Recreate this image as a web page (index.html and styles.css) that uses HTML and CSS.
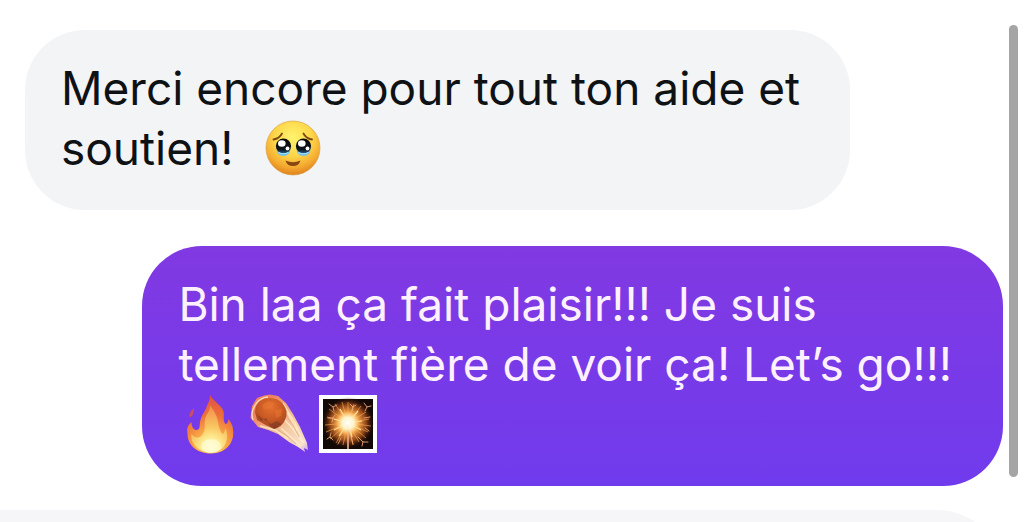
FILE: index.html
```html
<!DOCTYPE html>
<html lang="fr">
<head>
    <meta charset="UTF-8">
    <meta name="viewport" content="width=device-width, initial-scale=1.0">
    <title>Messages</title>
    <link rel="stylesheet" href="styles.css">
</head>
<body>
    <main class="chat">
        <div class="chat__body">
            <div class="thread">
                <p class="bubble bubble--received">
                    Merci encore pour tout ton aide et soutien!&nbsp;
                    <svg class="emoji" viewBox="0 0 60 60" role="img" aria-label="Visage retenant ses larmes">
                        <defs>
                            <radialGradient id="face" cx="0.5" cy="0.3" r="0.7">
                                <stop offset="0" stop-color="#fff46e"/>
                                <stop offset="0.5" stop-color="#fdd548"/>
                                <stop offset="0.8" stop-color="#f4aa30"/>
                                <stop offset="1" stop-color="#df811d"/>
                            </radialGradient>
                            <linearGradient id="eye" x1="0" y1="0" x2="0" y2="1">
                                <stop offset="0" stop-color="#0c0806"/>
                                <stop offset="0.75" stop-color="#0f141c"/>
                                <stop offset="1" stop-color="#27699a"/>
                            </linearGradient>
                        </defs>
                        <circle cx="30" cy="30" r="27" fill="url(#face)" stroke="#d99a35" stroke-width="0.6"/>
                        <path d="M10.5 21.5Q16.5 20.5 19 15.5M49 21.5Q43 20.5 40.5 15.5" fill="none" stroke="#7b4a12" stroke-width="1.8" stroke-linecap="round"/>
                        <path d="M13.5 31Q14 38 20.5 38Q27 38 27.500 31ZM33.5 31Q34 38 40.5 38Q47 38 47.5 31Z" fill="#6fbfe6"/>
                        <circle cx="20.500" cy="28" r="7.6" fill="url(#eye)"/>
                        <circle cx="40.500" cy="28" r="7.6" fill="url(#eye)"/>
                        <ellipse cx="18.8" cy="25.5" rx="3.8" ry="3.2" fill="#fff"/>
                        <ellipse cx="38.8" cy="25.5" rx="3.8" ry="3.2" fill="#fff"/>
                        <circle cx="24.5" cy="30.5" r="1.9" fill="#fff"/>
                        <circle cx="44.5" cy="30.5" r="1.9" fill="#fff"/>
                        <path d="M15.5 34.5Q20.5 37 25.5 34.5M35.5 34.5Q40.5 37 45.5 34.5" fill="none" stroke="#a5e3f8" stroke-width="1.2"/>
                        <path d="M22.5 42.5Q30 46 37.5 42.5Q36 48 30 48Q24 48 22.5 42.5Z" fill="#874711"/>
                    </svg>
                </p>
                <p class="bubble bubble--sent">
                    Bin laa ça fait plaisir!!! Je suis tellement fière de voir ça! Let’s go!!!
                    <span class="emoji-row">
                        <svg class="emoji" viewBox="0 0 60 60" role="img" aria-label="Feu">
                            <defs>
                                <radialGradient id="flame" gradientUnits="userSpaceOnUse" cx="29" cy="52" r="48">
                                    <stop offset="0" stop-color="#ffe06c"/>
                                    <stop offset="0.35" stop-color="#f8a344"/>
                                    <stop offset="0.65" stop-color="#ed713b"/>
                                    <stop offset="1" stop-color="#e25440"/>
                                </radialGradient>
                                <radialGradient id="flameCore" gradientUnits="userSpaceOnUse" cx="29" cy="53" r="42">
                                    <stop offset="0" stop-color="#ffffdf"/>
                                    <stop offset="0.22" stop-color="#fff19a"/>
                                    <stop offset="0.5" stop-color="#f9c964"/>
                                    <stop offset="1" stop-color="#f4914d"/>
                                </radialGradient>
                            </defs>
                            <path d="M28 1C31 7 38 10 41 16C43 20 40 26 43.5 30C46 30 46 27 46.5 25C49 29 51 31 51 36C53 47 45 59.5 29 59.5C14 59.5 5 50 5.5 39C4.5 34 6 31 9.5 28C9.5 32 11 36 14.5 36C19 36 17 30 18.5 26C20 20 23 18 24.5 13C26 9 28 7 28 1Z" fill="url(#flame)"/>
                            <path d="M12 14C12 18 11 22 8 23.5C6.5 20 8.5 17 12 14Z" fill="#c94e64"/>
                            <path d="M28 11C32 17 35 21 36 28C37 35 39 39 41 40C42 39 43 36 43.5 34C48 45 43 58.5 29 58.5C16 58.5 8 49 9.5 40C12 44 17 45 20 41C25 35 21 29 24 22C26 18 28 17 28 11Z" fill="url(#flameCore)" opacity="0.9"/>
                            <ellipse cx="29" cy="52" rx="10" ry="7" fill="#fffde0" opacity="0.6"/>
                        </svg><svg class="emoji" viewBox="0 0 60 60" role="img" aria-label="Comète">
                            <defs>
                                <linearGradient id="tail" x1="0.2" y1="0.2" x2="1" y2="1">
                                    <stop offset="0" stop-color="#ee8160"/>
                                    <stop offset="0.5" stop-color="#f4c9a0"/>
                                    <stop offset="0.85" stop-color="#fae0ce"/>
                                    <stop offset="1" stop-color="#c4a4ef"/>
                                </linearGradient>
                                <radialGradient id="rock" cx="0.5" cy="0.3" r="0.75">
                                    <stop offset="0" stop-color="#e5702f"/>
                                    <stop offset="0.5" stop-color="#c95a24"/>
                                    <stop offset="1" stop-color="#9a4220"/>
                                </radialGradient>
                            </defs>
                            <path d="M0.5 24L2 12L7 4L14 1.5L20 0.5L28 2L36 9L43 20L50 33L57 49L58 56L54 54L55 58L48 53L39 48L28 40L18 36L8 33L4 28Z" fill="url(#tail)"/>
                            <path d="M3 26C-1 15 9 3 18 3M33 9L45 29L54 50M31 34L42 44L51 52M34 25L43 35L52 48M10 32L25 36L38 45M37 18L47 37" fill="none" stroke="#ffefcb" stroke-width="1.4" opacity="0.8"/>
                            <path d="M35 20L43 31L49 43M28 36L36 41L46 50" fill="none" stroke="#e0a080" stroke-width="0.7"/>
                            <path d="M5 18Q5 8 15 4.500Q27 2 33 10Q39 18 35 26Q32 33 24 35Q15 31 7 26Z" fill="url(#rock)"/>
                            <path d="M6 20L11 27L16 24L20 32L25 35L31 30L27 27L21 30L16 27Z" fill="#6f3224" opacity="0.5"/>
                            <path d="M12 11L18 7L25 9L21 14L14 16ZM25 16L32 15L31 22L26 24Z" fill="#eb7b33" opacity="0.45"/>
                        </svg><svg class="emoji" viewBox="0 0 60 60" role="img" aria-label="Cierge magique">
                            <defs>
                                <radialGradient id="glow">
                                    <stop offset="0" stop-color="#fff"/>
                                    <stop offset="0.2" stop-color="#fff0b0"/>
                                    <stop offset="0.42" stop-color="#f2a047"/>
                                    <stop offset="0.7" stop-color="#9c4a18" stop-opacity="0.9"/>
                                    <stop offset="1" stop-color="#2b0e05" stop-opacity="0"/>
                                </radialGradient>
                                <radialGradient id="core">
                                    <stop offset="0" stop-color="#fff"/>
                                    <stop offset="0.5" stop-color="#fff6cf" stop-opacity="0.9"/>
                                    <stop offset="1" stop-color="#ffc565" stop-opacity="0"/>
                                </radialGradient>
                            </defs>
                            <path d="M1 1H59V59H1Z" fill="#fff"/>
                            <path d="M5 5H55V55H5Z" fill="#120806"/>
                            <circle cx="30" cy="29" r="26" fill="url(#glow)"/>
                            <path d="M30 29L30 8M30 29L36 10M30 29L43 12M30 29L48 18M30 29L51 25M30 29L53 32M30 29L50 38M30 29L48 44M30 29L41 48M30 29L35 51M30 29L25 51M30 29L18 49M30 29L12 45M30 29L8 38M30 29L7 31M30 29L9 23M30 29L11 15M30 29L17 10M30 29L24 8" stroke="#f8ad55" stroke-width="0.8" opacity="0.8"/>
                            <path d="M30 29L40 17M30 29L44 27M30 29L43 36M30 29L34 43M30 29L21 42M30 29L16 36M30 29L16 25M30 29L22 15" stroke="#ffe09a" stroke-width="1.2"/>
                            <path d="M32 10L35 13L34 17M35 13L38 11M46 9L49 13L53 12M49 13L47 17M11 10L15 13L19 11M15 13L16 17M10 24L15 24L17 21M15 24L14 28M46 24L52 23M47 34L51 37M40 43L45 48L50 48M45 48L44 52M15 46L12 43L9 45M12 43L13 39M33 42L35 50M23 44L20 50" fill="none" stroke="#f0a878" stroke-width="0.9" stroke-linecap="round"/>
                            <path d="M30 30V55" stroke="#e3aa83" stroke-width="1.7"/>
                            <circle cx="30" cy="29" r="12" fill="url(#core)"/>
                        </svg>
                    </span>
                </p>
            </div>
            <div class="scrollbar"></div>
        </div>
        <div class="next-message"></div>
    </main>
</body>
</html>
```
FILE: styles.css
```css
:root {
    --received: #f2f4f6;
    --received-text: #0f1215;
    --sent-top: #8139e2;
    --sent-bottom: #703bed;
    --sent-text: #fdf1ff;
    --thumb: #a5a5a5;
    --white: #ffffff;
    --font-family-base: 'Inter', -apple-system, BlinkMacSystemFont, sans-serif;
}

* {
    box-sizing: border-box;
}

body {
    margin: 0;
    background: var(--white);
    font-family: var(--font-family-base);
}

.chat {
    height: 100vh;
    overflow: hidden;
}

.chat__body {
    display: flex;
    gap: 6px;
    padding-right: 9px;
}

.thread {
    flex: 1;
    display: flex;
    flex-direction: column;
    gap: 36px;
    padding: 30px 0 24px 25px;
}

.bubble {
    margin: 0;
    padding: 28px 36px 32px;
    border-radius: 60px;
    font-size: 46px;
    line-height: 60px;
}

.bubble--received {
    align-self: flex-start;
    max-width: 84.4%;
    background: var(--received);
    color: var(--received-text);
}

.bubble--sent {
    align-self: flex-end;
    max-width: 88%;
    background: linear-gradient(var(--sent-top), var(--sent-bottom));
    color: var(--sent-text);
}

.emoji {
    width: 60px;
    height: 60px;
    margin: 0 4px;
    vertical-align: top;
}

.emoji-row {
    display: flex;
}

.scrollbar {
    width: 9px;
    margin: 25px 0 33px;
    border-radius: 5px;
    background: var(--thumb);
}

/* Haut de la bulle suivante */
.next-message {
    height: 132px;
    margin-right: 24px;
    border-radius: 0 66px 66px 0;
    background: #f6f6f8;
}
```
